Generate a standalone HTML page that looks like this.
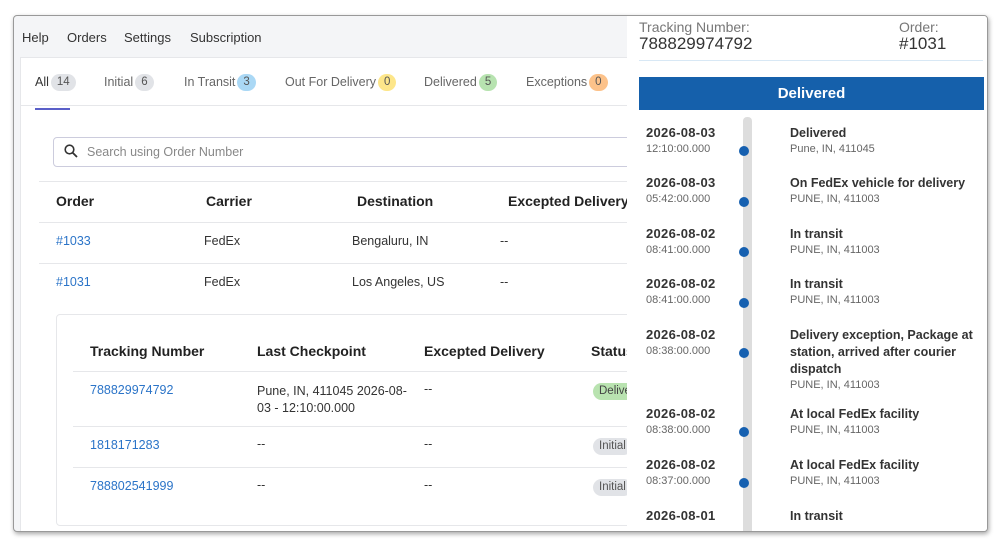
<!DOCTYPE html>
<html><head><meta charset="utf-8"><style>
*{margin:0;padding:0;box-sizing:border-box}
body{width:1000px;height:546px;background:#fff;font-family:"Liberation Sans",sans-serif;position:relative;overflow:hidden;color:#222}
.a{position:absolute;white-space:nowrap}
#win{position:absolute;left:13px;top:15px;width:975px;height:517px;border:1px solid #999;border-radius:4px;box-shadow:1px 2px 5px rgba(0,0,0,.35);overflow:hidden;background:#f4f5f7}
.nav{font-size:13px;color:#333;top:14px}
.card{position:absolute;left:6px;top:41px;width:620px;height:490px;background:#fff;border:1px solid #e6e7ea}
.tab{font-size:12.5px;color:#666;top:60px}
.b{display:inline-block;padding:0 6px;border-radius:9px;font-size:11.5px;color:#555;margin-left:2px;line-height:17px;vertical-align:1px}
.th{font-size:14px;font-weight:bold;color:#222}
.td{font-size:12.5px;color:#333}
.lk{font-size:12.5px;color:#2b74c8}
.hr{position:absolute;height:1px;background:#e6e7ea}
.rp{position:absolute;left:613px;top:0;width:362px;height:517px;background:#fff}
.d{font-size:13px;font-weight:bold;color:#333;letter-spacing:.3px}
.t{font-size:11px;color:#666;margin-top:3px}
.ev{font-size:12.5px;font-weight:bold;color:#333;line-height:17px;white-space:normal;width:190px}
.loc{font-size:11px;color:#666;margin-top:1px}
.dot{position:absolute;left:112px;width:10px;height:10px;border-radius:50%;background:#1660b0}
</style></head><body>
<div id="win">
<span class="a nav" style="left:8px">Help</span>
<span class="a nav" style="left:53px">Orders</span>
<span class="a nav" style="left:110px">Settings</span>
<span class="a nav" style="left:176px">Subscription</span>
<div class="card">
<span class="a tab" style="left:14px;top:16px;color:#333">All<span class="b" style="background:#e1e3e7">14</span></span>
<div class="a" style="left:14px;top:50px;width:35px;height:2px;background:#5a5fc8"></div>
<span class="a tab" style="left:83px;top:16px">Initial<span class="b" style="background:#e1e3e7">6</span></span>
<span class="a tab" style="left:163px;top:16px">In Transit<span class="b" style="background:#aad8f5">3</span></span>
<span class="a tab" style="left:264px;top:16px">Out For Delivery<span class="b" style="background:#fde68a">0</span></span>
<span class="a tab" style="left:403px;top:16px">Delivered<span class="b" style="background:#b7e3b0">5</span></span>
<span class="a tab" style="left:505px;top:16px">Exceptions<span class="b" style="background:#fcc28a">0</span></span>
<div class="hr" style="left:0;top:47px;width:620px"></div>
<div class="a" style="left:32px;top:79px;width:600px;height:30px;border:1px solid #ccd;border-radius:4px"></div>
<svg class="a" style="left:43px;top:86px" width="14" height="14" viewBox="0 0 14 14"><circle cx="5.5" cy="5.5" r="4.3" fill="none" stroke="#333" stroke-width="1.6"/><path d="M8.7 8.7L13 13" stroke="#333" stroke-width="1.8"/></svg>
<span class="a" style="left:66px;top:87px;font-size:12.5px;color:#888">Search using Order Number</span>
<div class="hr" style="left:18px;top:123px;width:602px"></div>
<span class="a th" style="left:35px;top:135px">Order</span>
<span class="a th" style="left:185px;top:135px">Carrier</span>
<span class="a th" style="left:336px;top:135px">Destination</span>
<span class="a th" style="left:487px;top:135px">Excepted Delivery</span>
<div class="hr" style="left:18px;top:164px;width:602px"></div>
<span class="a lk" style="left:35px;top:176px">#1033</span>
<span class="a td" style="left:183px;top:176px">FedEx</span>
<span class="a td" style="left:331px;top:176px">Bengaluru, IN</span>
<span class="a td" style="left:479px;top:176px">--</span>
<div class="hr" style="left:18px;top:205px;width:602px"></div>
<span class="a lk" style="left:35px;top:217px">#1031</span>
<span class="a td" style="left:183px;top:217px">FedEx</span>
<span class="a td" style="left:331px;top:217px">Los Angeles, US</span>
<span class="a td" style="left:479px;top:217px">--</span>
<div class="a" style="left:35px;top:256px;width:600px;height:212px;border:1px solid #e6e7ea;border-radius:4px"></div>
<span class="a th" style="left:69px;top:285px">Tracking Number</span>
<span class="a th" style="left:236px;top:285px">Last Checkpoint</span>
<span class="a th" style="left:403px;top:285px">Excepted Delivery</span>
<span class="a th" style="left:570px;top:285px">Status</span>
<div class="hr" style="left:52px;top:313px;width:570px"></div>
<span class="a lk" style="left:69px;top:325px">788829974792</span>
<span class="a td" style="left:236px;top:325px;line-height:17px">Pune, IN, 411045 2026-08-<br>03 - 12:10:00.000</span>
<span class="a td" style="left:403px;top:324px">--</span>
<span class="a" style="left:572px;top:325px;background:#b9e3b0;border-radius:9px;padding:0 6px;font-size:11.5px;color:#444;line-height:17px">Delivered</span>
<div class="hr" style="left:52px;top:368px;width:570px"></div>
<span class="a lk" style="left:69px;top:380px">1818171283</span>
<span class="a td" style="left:236px;top:379px">--</span>
<span class="a td" style="left:403px;top:379px">--</span>
<span class="a" style="left:572px;top:380px;background:#e1e3e7;border-radius:9px;padding:0 6px;font-size:11.5px;color:#555;line-height:17px">Initial</span>
<div class="hr" style="left:52px;top:409px;width:570px"></div>
<span class="a lk" style="left:69px;top:421px">788802541999</span>
<span class="a td" style="left:236px;top:420px">--</span>
<span class="a td" style="left:403px;top:420px">--</span>
<span class="a" style="left:572px;top:421px;background:#e1e3e7;border-radius:9px;padding:0 6px;font-size:11.5px;color:#555;line-height:17px">Initial</span>
</div>
<div class="rp">
<span class="a" style="left:12px;top:3px;font-size:14px;color:#777">Tracking Number:</span>
<span class="a" style="left:12px;top:18px;font-size:17px;color:#333">788829974792</span>
<span class="a" style="left:272px;top:3px;font-size:14px;color:#777">Order:</span>
<span class="a" style="left:272px;top:18px;font-size:17px;color:#333">#1031</span>
<div class="a" style="left:12px;top:44px;width:344px;height:1px;background:#d8e8f5"></div>
<div class="a" style="left:12px;top:61px;width:345px;height:33px;background:#1560ab;color:#fff;font-size:15px;font-weight:bold;text-align:center;line-height:33px">Delivered</div>
<div class="a" style="left:116px;top:101px;width:9px;height:420px;background:#ddd;border-radius:4px"></div>
<div class="a" style="left:19px;top:109px">
<div class="a" style="top:0"><div class="d">2026-08-03</div><div class="t">12:10:00.000</div></div>
<div class="a" style="top:50px"><div class="d">2026-08-03</div><div class="t">05:42:00.000</div></div>
<div class="a" style="top:101px"><div class="d">2026-08-02</div><div class="t">08:41:00.000</div></div>
<div class="a" style="top:151px"><div class="d">2026-08-02</div><div class="t">08:41:00.000</div></div>
<div class="a" style="top:202px"><div class="d">2026-08-02</div><div class="t">08:38:00.000</div></div>
<div class="a" style="top:281px"><div class="d">2026-08-02</div><div class="t">08:38:00.000</div></div>
<div class="a" style="top:332px"><div class="d">2026-08-02</div><div class="t">08:37:00.000</div></div>
<div class="a" style="top:383px"><div class="d">2026-08-01</div></div>
</div>
<div class="dot" style="top:130px"></div><div class="dot" style="top:181px"></div><div class="dot" style="top:231px"></div><div class="dot" style="top:282px"></div><div class="dot" style="top:332px"></div><div class="dot" style="top:411px"></div><div class="dot" style="top:462px"></div>
<div class="a" style="left:163px;top:109px">
<div class="a" style="top:0"><div class="ev">Delivered</div><div class="loc">Pune, IN, 411045</div></div>
<div class="a" style="top:50px"><div class="ev">On FedEx vehicle for delivery</div><div class="loc">PUNE, IN, 411003</div></div>
<div class="a" style="top:101px"><div class="ev">In transit</div><div class="loc">PUNE, IN, 411003</div></div>
<div class="a" style="top:151px"><div class="ev">In transit</div><div class="loc">PUNE, IN, 411003</div></div>
<div class="a" style="top:202px"><div class="ev">Delivery exception, Package at station, arrived after courier dispatch</div><div class="loc">PUNE, IN, 411003</div></div>
<div class="a" style="top:281px"><div class="ev">At local FedEx facility</div><div class="loc">PUNE, IN, 411003</div></div>
<div class="a" style="top:332px"><div class="ev">At local FedEx facility</div><div class="loc">PUNE, IN, 411003</div></div>
<div class="a" style="top:383px"><div class="ev">In transit</div></div>
</div>
</div>
</div>
</body></html>
